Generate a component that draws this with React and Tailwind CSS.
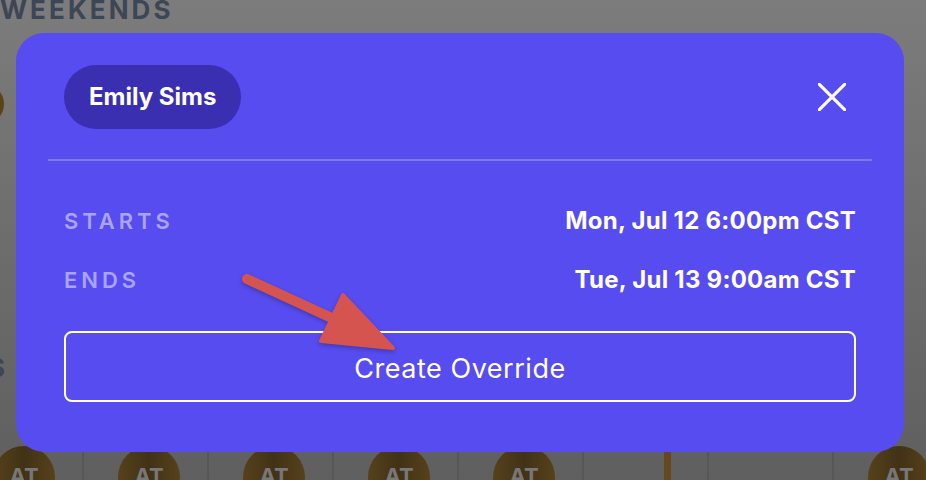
import React from 'react';

const AVATAR_COLS = [0, 1, 2, 3, 4, 5, 6, 7];

function CloseIcon() {
  return (
    <svg width="28" height="28" viewBox="0 0 28 28" fill="none">
      <path d="M1 1 L27 27 M27 1 L1 27" stroke="white" strokeWidth="3.2" strokeLinecap="round" />
    </svg>
  );
}

function Avatar() {
  return (
    <div className="mt-[6px] flex h-[62px] w-[62px] items-start justify-center rounded-full bg-gradient-to-r from-[#56411a] via-[#413217] to-[#56411a] pt-[14px] text-[22px] font-bold text-[#777777]">
      AT
    </div>
  );
}

function Arrow() {
  return (
    <svg
      className="pointer-events-none absolute left-0 top-0"
      width="926"
      height="480"
      viewBox="0 0 926 480"
      style={{ filter: 'drop-shadow(0 2px 2px rgba(0,0,0,0.25))' }}
    >
      <path d="M247 279 L336 320" stroke="#d65450" strokeWidth="10" strokeLinecap="round" />
      <path
        d="M343 295 L321 341 L393 348 Z"
        fill="#d65450"
        stroke="#d65450"
        strokeWidth="4"
        strokeLinejoin="round"
      />
    </svg>
  );
}

export default function App() {
  return (
    <div className="relative h-[480px] w-[926px] overflow-hidden bg-gradient-to-b from-[#7c7c7c] to-[#5f5f5f] font-['Inter',sans-serif]">
      {/* page behind the dialog */}
      <div className="flex h-full flex-col">
        <div className="-mt-[6px] text-[26px] font-bold leading-[32px] tracking-[0.12em] text-[#3c4655]">WEEKENDS</div>
        <div className="mt-[58px] -ml-[36px] h-10 w-10 rounded-full bg-[#5a4318]" />
        <div className="mt-[228px] -ml-[12px] text-[26px] font-bold leading-[32px] text-[#3c4655]">S</div>
        <div className="mt-auto flex h-[40px] -ml-[41px]">
          {AVATAR_COLS.map(i => (
            <div key={i} className="relative flex h-full w-[125px] shrink-0 justify-center border-r-2 border-[#575757] pl-[7px]">
              {i !== 5 && i !== 6 && <Avatar />}
              {i === 5 && <div className="absolute left-[80px] top-0 h-full w-[7px] bg-[#65481f]" />}
            </div>
          ))}
          <div className="flex h-full w-[125px] shrink-0 justify-center pl-[7px]">
            <Avatar />
          </div>
        </div>
      </div>

      {/* dialog */}
      <div className="absolute left-4 top-[33px] h-[419px] w-[888px] rounded-[28px] bg-[#574cef] px-8 pt-8 text-white">
        <div className="flex items-center justify-between border-b-2 border-white/25 px-4 pb-[30px]">
          <div className="flex h-16 items-center rounded-full bg-[#3a2fb1] px-[25px] text-[24px] font-bold">Emily Sims</div>
          <button className="flex h-12 w-12 items-center justify-center">
            <CloseIcon />
          </button>
        </div>
        <div className="flex flex-col px-4 pt-[46px]">
          <div className="flex h-7 items-center justify-between">
            <span className="text-[22px] font-semibold tracking-[0.18em] text-[#aaa4f8]">STARTS</span>
            <span className="text-[24px] font-bold tracking-[0.01em]">Mon, Jul 12 6:00pm CST</span>
          </div>
          <div className="mt-[31px] flex h-7 items-center justify-between">
            <span className="text-[22px] font-semibold tracking-[0.18em] text-[#aaa4f8]">ENDS</span>
            <span className="text-[24px] font-bold tracking-[0.01em]">Tue, Jul 13 9:00am CST</span>
          </div>
          <button className="mt-[37px] flex h-[71px] items-center justify-center rounded-lg border-2 border-white pt-[5px] text-[27px] tracking-[0.02em]">
            Create Override
          </button>
        </div>
      </div>

      <Arrow />
    </div>
  );
}
